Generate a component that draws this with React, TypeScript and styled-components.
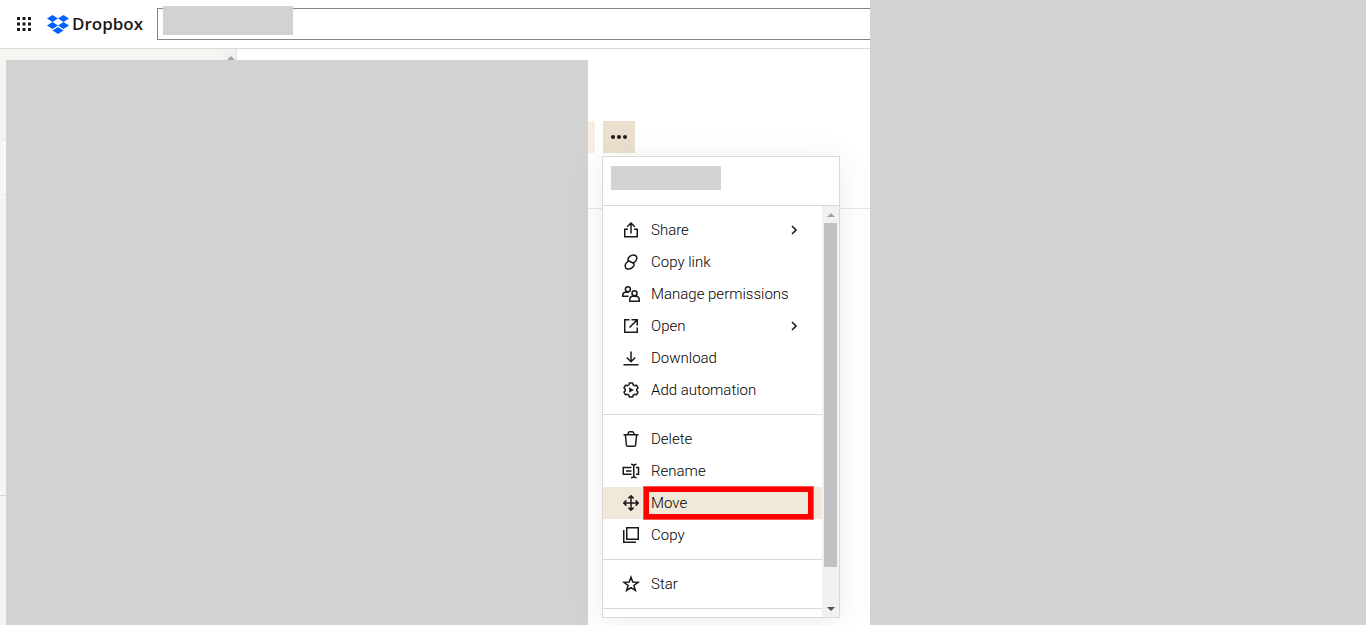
import React from "react";
import styled, { createGlobalStyle } from "styled-components";

const ink = "#1e1919";
const line = "#dcd9d4";
const redacted = "#d2d2d2";

const GlobalStyle = createGlobalStyle`
  * { box-sizing: border-box; }
  body { margin: 0; background: #fff; color: ${ink}; font-family: Roboto, "Liberation Sans", sans-serif; }
  button, input { font: inherit; color: inherit; }
`;

const Page = styled.div`
  display: grid;
  grid-template-columns: 870px 1fr;
  height: 100vh;
  overflow: hidden;
`;

const Shell = styled.div`
  display: flex;
  flex-direction: column;
  min-width: 0;
  min-height: 0;
`;

const SidePanel = styled.div`
  background: ${redacted};
`;

const Header = styled.header`
  display: flex;
  align-items: center;
  height: 49px;
  padding-left: 12px;
  border-bottom: 1px solid ${line};
`;

const IconButton = styled.button`
  display: flex;
  align-items: center;
  justify-content: center;
  width: 24px;
  height: 24px;
  padding: 0;
  border: 0;
  background: none;
`;

const Brand = styled.a`
  display: flex;
  align-items: center;
  gap: 3px;
  width: 110px;
  margin-left: 11px;
  color: ${ink};
  font: 600 17px/24px "Open Sans", "Noto Sans", sans-serif;
  text-decoration: none;
`;

const Search = styled.div`
  position: relative;
  flex: 1;
  height: 32px;
`;

const SearchInput = styled.input`
  display: block;
  width: 100%;
  height: 32px;
  padding: 0 8px;
  border: 1px solid #8c8279;
  border-right: 0;
  border-radius: 0;
  outline: 0;
`;

const SearchPatch = styled.div`
  position: absolute;
  left: 6px;
  top: -2px;
  width: 130px;
  height: 29px;
  background: ${redacted};
`;

const Workspace = styled.div`
  position: relative;
  display: flex;
  flex: 1;
  min-height: 0;
`;

const Sidebar = styled.aside`
  display: flex;
  width: 237px;
  background: #f7f5f2;
  border-right: 1px solid #e6e3de;
`;

const SidebarSections = styled.div`
  flex: 1;
  padding-top: 90px;
`;

const SidebarCard = styled.div`
  height: 56px;
  margin-left: 3px;
  background: #fbfaf8;
  border: 1px solid #e6e3de;
  border-width: 1px 0;
`;

const SidebarRule = styled.div`
  margin-top: 300px;
  border-top: 1px solid ${line};
`;

const SidebarScroll = styled.div`
  display: flex;
  justify-content: center;
  width: 13px;
  padding: 7px 0 0 3px;
  background: #f1f1f1;
`;

const Content = styled.main`
  flex: 1;
  min-width: 0;
`;

const Toolbar = styled.div`
  display: flex;
  gap: 8px;
  height: 160px;
  padding: 72px 0 0 258px;
  border-bottom: 1px solid #e9e6de;
`;

const ToolbarButton = styled.button<{ $pale?: boolean }>`
  display: flex;
  align-items: center;
  justify-content: center;
  width: ${(p) => (p.$pale ? 100 : 32)}px;
  height: 32px;
  padding: 0;
  border: 0;
  background: ${(p) => (p.$pale ? "#f7efe4" : "#ebdfcd")};
`;

const ContentCover = styled.div`
  position: absolute;
  inset: 11px auto 0 6px;
  width: 582px;
  background: ${redacted};
`;

const Menu = styled.div`
  position: absolute;
  left: 602px;
  top: 107px;
  width: 238px;
  border: 1px solid ${line};
  background: #fff;
  box-shadow: 0 4px 32px rgba(0, 0, 0, 0.08);
`;

const MenuHeader = styled.div`
  height: 49px;
  padding: 9px 8px;
  border-bottom: 1px solid ${line};
`;

const MenuTitlePatch = styled.div`
  width: 110px;
  height: 24px;
  background: ${redacted};
`;

const MenuBody = styled.div`
  display: flex;
  height: 411px;
`;

const MenuList = styled.div`
  flex: 1;
  overflow: hidden;
`;

const MenuGroup = styled.div`
  padding: 8px 0;
  border-bottom: 1px solid ${line};
`;

const MenuItem = styled.button<{ $active?: boolean }>`
  position: relative;
  display: flex;
  align-items: center;
  width: 100%;
  height: 32px;
  padding: 0 16px;
  border: 0;
  background: ${(p) => (p.$active ? "#f0e9da" : "transparent")};
  color: #000;
  font-size: 15px;
  font-weight: 300;
  line-height: 20px;
  text-align: left;
`;

const MenuLabel = styled.span`
  flex: 1;
  margin-left: 8px;
  white-space: nowrap;
`;

const Highlight = styled.span`
  position: absolute;
  inset: -1px 8px -1px 40px;
  border: 6px solid #ff0000;
  outline-offset: -1px;
  outline: 1px solid #ff5a50;
`;

const Scrollbar = styled.div`
  display: flex;
  flex-direction: column;
  align-items: center;
  width: 17px;
  background: #f1f1f1;
`;

const ScrollArrow = styled.div`
  display: flex;
  align-items: center;
  justify-content: center;
  height: 17px;
`;

const ScrollThumb = styled.div`
  width: 13px;
  height: 344px;
  margin-bottom: auto;
  background: #c1c1c1;
`;

const Glyph = styled.svg`
  display: block;
  flex: none;
  fill: none;
  stroke: ${ink};
  stroke-width: 1.5;
`;

const Triangle = ({ down, color }: { down?: boolean; color: string }) => (
  <svg width="8" height="4" viewBox="0 0 8 4" aria-hidden="true">
    <path d={down ? "M0 0h8L4 4z" : "M0 4h8L4 0z"} fill={color} />
  </svg>
);

const icons: Record<string, React.ReactNode> = {
  share: <path d="M9 11.25H5.75v7.5h12.5v-7.5H15M12 15.5V5.2M8.2 8.8 12 5l3.8 3.8" />,
  link: (
    <>
      <path d="M13.6 13.6c2.6-1.6 4.2-3.4 4.2-5.3 0-2-1.3-3.4-3.3-3.4-2.5 0-5.6 2.4-5.6 4.6 0 2.6 6.2 2.4 6.2 5 0 2.2-3.1 4.6-5.6 4.6-2 0-3.3-1.4-3.3-3.4 0-1.9 1.6-3.7 4.2-5.3" />
    </>
  ),
  people: (
    <>
      <circle cx="8.9" cy="7.2" r="2.5" />
      <path d="M9.5 14.25H3.75v-.8c0-1.9 1.2-3.2 3-3.2h3" />
      <circle cx="15.5" cy="11.2" r="2.5" />
      <path d="M10.75 19.25h9.5v-1.5c0-2.2-1.2-3.5-3.1-3.5h-3.3c-1.9 0-3.1 1.3-3.1 3.5z" />
    </>
  ),
  open: <path d="M10.5 5.75H5.75v12.5h12.5V13.5M12.5 5.75h5.75v5.75M18 6l-7.5 7.5" />,
  download: <path d="M4.5 18.75h15M12 5.5v10M7.8 11.5l4.2 4.2 4.2-4.2" />,
  automation: (
    <>
      <path
        d="M10.4 5h3.2l.6 1.9 1.3.8 2-.5 1.5 2.7-1.3 1.4v1.4l1.3 1.4-1.5 2.7-2-.5-1.3.8-.6 1.9h-3.2l-.6-1.9-1.3-.8-2 .5L5 14.1l1.3-1.4v-1.4L5 9.9l1.5-2.7 2 .5 1.3-.8z"
        strokeLinejoin="round"
      />
      <path d="M10.2 9.2v5.6l4.6-2.8z" fill={ink} stroke="none" />
    </>
  ),
  trash: (
    <path
      d="M4.5 7.75h15M6.4 8l1 10c.1.8.5 1.25 1.3 1.25h6.6c.8 0 1.2-.45 1.3-1.25l1-10M8.9 7.5l.4-1.6c.2-.8.6-1.15 1.3-1.15h2.8c.7 0 1.1.35 1.3 1.15l.4 1.6"
    />
  ),
  rename: (
    <>
      <path d="M12.5 8.5H4.25v6.75h8.25M17 8.5h2.5v6.75H17M7 11.9h5.5" />
      <path d="M12 5.25c1.8 0 2.75.6 2.75 2v9.5c0 1.4-.95 2-2.75 2M17.5 5.25c-1.8 0-2.75.6-2.75 2v9.5c0 1.4.95 2 2.75 2" />
    </>
  ),
  move: <path d="M12 5v14M5 12h14M9.4 7.4 12 4.8l2.6 2.6M9.4 16.6l2.6 2.6 2.6-2.6M7.4 9.4 4.8 12l2.6 2.6M16.6 9.4l2.6 2.6-2.6 2.6" />,
  copy: <path d="M7.75 4.75h11.5v11.5H7.75zM4.75 7v12.25H17" />,
  star: <path d="m12 5.2 1.8 4.9 5.2.2-4.1 3.2 1.5 5-4.4-2.9-4.4 2.9 1.5-5L5 10.3l5.2-.2z" />,
};

type Entry = { label: string; icon: string; submenu?: boolean; active?: boolean };

const groups: Entry[][] = [
  [
    { label: "Share", icon: "share", submenu: true },
    { label: "Copy link", icon: "link" },
    { label: "Manage permissions", icon: "people" },
    { label: "Open", icon: "open", submenu: true },
    { label: "Download", icon: "download" },
    { label: "Add automation", icon: "automation" },
  ],
  [
    { label: "Delete", icon: "trash" },
    { label: "Rename", icon: "rename" },
    { label: "Move", icon: "move", active: true },
    { label: "Copy", icon: "copy" },
  ],
  [{ label: "Star", icon: "star" }],
];

export default function App() {
  return (
    <>
      <GlobalStyle />
      <Page>
        <Shell>
          <Header>
            <IconButton aria-label="Apps">
              <svg width="14" height="14" viewBox="0 0 14 14" fill={ink}>
                {[0, 5.5, 11].map((y) =>
                  [0, 5.5, 11].map((x) => <rect key={`${x}-${y}`} x={x} y={y} width="3" height="3" />)
                )}
              </svg>
            </IconButton>
            <Brand href="#">
              <svg width="22" height="19" viewBox="0 0 22 19" fill="#0061fe" aria-hidden="true">
                <path d="M5.5 0 11 3.5 5.5 7 0 3.5zM16.5 0 22 3.5 16.5 7 11 3.5zM5.5 7 11 10.5 5.5 14 0 10.5zM16.5 7 22 10.5 16.5 14 11 10.5zM11 11.9l5.5 3.5L11 19l-5.5-3.6z" />
              </svg>
              Dropbox
            </Brand>
            <Search>
              <SearchInput type="search" aria-label="Search" />
              <SearchPatch />
            </Search>
          </Header>
          <Workspace>
            <Sidebar>
              <SidebarSections>
                <SidebarCard />
                <SidebarRule />
              </SidebarSections>
              <SidebarScroll>
                <Triangle color="#a3a3a3" />
              </SidebarScroll>
            </Sidebar>
            <Content>
              <Toolbar>
                <ToolbarButton $pale aria-label="Share file" />
                <ToolbarButton aria-label="More actions">
                  <svg width="16" height="4" viewBox="0 0 16 4" fill={ink}>
                    <circle cx="2" cy="2" r="2" />
                    <circle cx="8" cy="2" r="2" />
                    <circle cx="14" cy="2" r="2" />
                  </svg>
                </ToolbarButton>
              </Toolbar>
            </Content>
            <ContentCover />
            <Menu role="menu">
              <MenuHeader>
                <MenuTitlePatch />
              </MenuHeader>
              <MenuBody>
                <MenuList>
                  {groups.map((group, i) => (
                    <MenuGroup key={i}>
                      {group.map((item) => (
                        <MenuItem key={item.label} role="menuitem" $active={item.active}>
                          <Glyph width="24" height="24" viewBox="0 0 24 24" aria-hidden="true">
                            {icons[item.icon]}
                          </Glyph>
                          <MenuLabel>{item.label}</MenuLabel>
                          {item.submenu && (
                            <Glyph width="24" height="24" viewBox="0 0 24 24" aria-hidden="true">
                              <path d="m10 8 4 4-4 4" strokeWidth="1.6" />
                            </Glyph>
                          )}
                          {item.active && <Highlight />}
                        </MenuItem>
                      ))}
                    </MenuGroup>
                  ))}
                </MenuList>
                <Scrollbar>
                  <ScrollArrow>
                    <Triangle color="#a3a3a3" />
                  </ScrollArrow>
                  <ScrollThumb />
                  <ScrollArrow>
                    <Triangle down color="#505050" />
                  </ScrollArrow>
                </Scrollbar>
              </MenuBody>
            </Menu>
          </Workspace>
        </Shell>
        <SidePanel />
      </Page>
    </>
  );
}
